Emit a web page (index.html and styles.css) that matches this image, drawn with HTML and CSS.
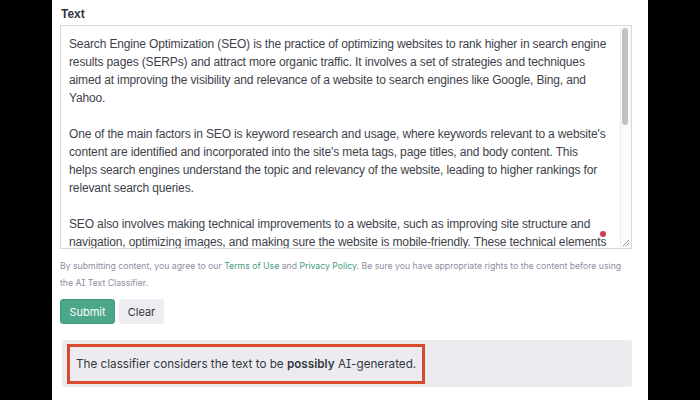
FILE: index.html
```html
<!DOCTYPE html>
<html lang="en">
<head>
    <meta charset="UTF-8">
    <meta name="viewport" content="width=device-width, initial-scale=1.0">
    <title>AI Text Classifier</title>
    <link rel="stylesheet" href="styles.css">
</head>
<body>
    <div class="page">
        <div class="label">Text</div>
        <div class="textbox">
            <div class="content">
                <p>Search Engine Optimization (SEO) is the practice of optimizing websites to rank higher in search engine<br>results pages (SERPs) and attract more organic traffic. It involves a set of strategies and techniques<br>aimed at improving the visibility and relevance of a website to search engines like Google, Bing, and<br>Yahoo.</p>
                <p>One of the main factors in SEO is keyword research and usage, where keywords relevant to a website's<br>content are identified and incorporated into the site's meta tags, page titles, and body content. This<br>helps search engines understand the topic and relevancy of the website, leading to higher rankings for<br>relevant search queries.</p>
                <p>SEO also involves making technical improvements to a website, such as improving site structure and<br>navigation, optimizing images, and <span class="squiggle">making sure</span> the website is mobile-friendly. These technical elements<br>help search engines crawl and index the site.</p>
            </div>
            <div class="scrollbar"><div class="thumb"></div></div>
            <span class="dot"></span>
            <svg class="grip" width="8" height="8" viewBox="0 0 8 8">
                <path d="M7 1 L1 7 M7 4 L4 7" stroke="#9a9a9a" stroke-width="1" fill="none"/>
            </svg>
        </div>
        <p class="terms">By submitting content, you agree to our <a href="#">Terms of Use</a> and <a href="#">Privacy Policy</a>. Be sure you have appropriate rights to the content before using the AI Text Classifier.</p>
        <div class="actions">
            <button class="btn submit">Submit</button>
            <button class="btn clear">Clear</button>
        </div>
        <div class="result">
            <span class="highlight">The classifier considers the text to be&nbsp;<b>possibly</b>&nbsp;AI-generated.</span>
        </div>
    </div>
</body>
</html>
```

FILE: styles.css
```css
*{
    margin: 0;
    padding: 0;
    box-sizing: border-box;
}
body{
    background-color: black;
    font-family: "Liberation Sans", Arial, sans-serif;
    color: #353740;
}
.page{
    width: 596px;
    height: 400px;
    margin: 0 auto;
    background-color: white;
    padding: 6px 16px 0 8px;
    overflow: hidden;
}
.label{
    font-size: 12px;
    font-weight: bold;
    line-height: 16px;
    margin-left: 1px;
    margin-bottom: 3px;
}
.textbox{
    position: relative;
    height: 224px;
    border: 1px solid #d9d9e3;
    overflow: hidden;
}
.content{
    padding: 9px 13px 0 8px;
    font-size: 12px;
    letter-spacing: -0.14px;
    line-height: 18px;
    color: #3e3f4b;
}
.content p{
    margin-bottom: 18px;
}
.squiggle{
    text-decoration: underline;
    text-decoration-color: #7aa7e0;
    text-underline-offset: 3px;
}
.scrollbar{
    position: absolute;
    top: 0;
    right: 0;
    bottom: 0;
    width: 11px;
    border-left: 1px solid #ececec;
    background-color: #fafafa;
}
.thumb{
    margin: 2px 0 0 1px;
    width: 6px;
    height: 97px;
    border-radius: 3px;
    background-color: #c2c2c2;
}
.dot{
    position: absolute;
    left: 539px;
    top: 205px;
    width: 6px;
    height: 6px;
    border-radius: 50%;
    background-color: #d23b4b;
}
.grip{
    position: absolute;
    right: 1px;
    bottom: 1px;
}
.terms{
    margin-top: 9px;
    font-family: Inter, "Liberation Sans", sans-serif;
    font-feature-settings: "cv08";
    font-size: 8.7px;
    line-height: 17px;
    color: #8e8ea0;
}
.terms a{
    color: #3f9c80;
    text-decoration: none;
}
.actions{
    display: flex;
    gap: 4px;
    margin-top: 7px;
}
.btn{
    height: 25px;
    border: none;
    border-radius: 3px;
    font-family: Inter, "Liberation Sans", sans-serif;
    font-size: 11px;
}
.submit{
    width: 55px;
    background-color: #4ca68a;
    color: white;
    border: 1px solid #3e9a7e;
}
.clear{
    width: 45px;
    background-color: #ececf1;
    color: #353740;
}
.result{
    margin: 16px 0 0 2px;
    height: 47px;
    padding: 4px 5px;
    background-color: #ececf0;
    border-radius: 3px;
}
.highlight{
    display: inline-flex;
    align-items: center;
    height: 40px;
    padding: 0 6px;
    border: 3px solid #d84a2c;
    font-family: Inter, "Liberation Sans", sans-serif;
    font-feature-settings: "cv08";
    font-size: 11.7px;
    color: #353740;
}
.highlight b{
    font-weight: 600;
}
```
